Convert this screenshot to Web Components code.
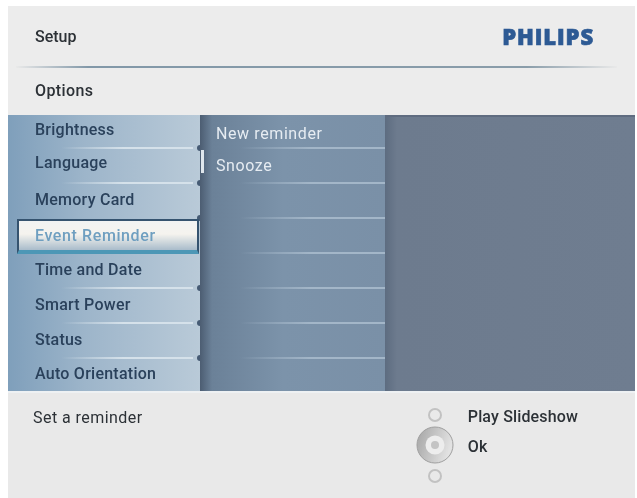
<!DOCTYPE html>
<html>
<head>
<meta charset="utf-8">
<style>
html, body { margin: 0; background: #fff; }
body { padding: 6px 2px 0 8px; height: 498px; box-sizing: border-box; overflow: hidden; font-family: "Roboto", "Liberation Sans", sans-serif; }
</style>
</head>
<body>
<frame-screen>
  <top-bar slot="top"></top-bar>
  <menu-list slot="left" variant="main" selected="3" items="Brightness|Language|Memory Card|Event Reminder|Time and Date|Smart Power|Status|Auto Orientation"></menu-list>
  <menu-list slot="middle" variant="sub" items="New reminder|Snooze||||||"></menu-list>
  <hint-bar slot="bottom"></hint-bar>
</frame-screen>
<script>
"use strict";
class FrameScreen extends HTMLElement {
    constructor() {
        super();
        this.attachShadow({ mode: 'open' });
    }
    connectedCallback() {
        this.shadowRoot.innerHTML = `
            <style>
                :host {
                    display: flex;
                    flex-direction: column;
                    height: 492px;
                    background: #e9e9e9;
                    color: #2c3136;
                    filter: blur(0.45px);
                }
                .panel {
                    display: grid;
                    grid-template-columns: 192px 185px 1fr;
                    height: 276px;
                    overflow: hidden;
                }
                .right {
                    background: linear-gradient(90deg, #5d6c80 0, #6d7b8e 12px, #6f7d90 100%);
                    border-top: 2px solid #5f6c80;
                }
            </style>
            <slot name="top"></slot>
            <div class="panel">
                <slot name="left"></slot>
                <slot name="middle"></slot>
                <div class="right"></div>
            </div>
            <slot name="bottom"></slot>
        `;
    }
}
class TopBar extends HTMLElement {
    constructor() {
        super();
        this.attachShadow({ mode: 'open' });
    }
    connectedCallback() {
        this.shadowRoot.innerHTML = `
            <style>
                :host { display: block; height: 109px; font-size: 16px; background: #ececec; }
                .title {
                    display: flex;
                    justify-content: space-between;
                    align-items: center;
                    height: 60px;
                    padding: 0 41px 0 27px;
                    box-sizing: border-box;
                    font-weight: 500;
                }
                .logo {
                    color: #2d5a94;
                    font: 800 22px "Open Sans", sans-serif;
                    -webkit-text-stroke: 0.7px #2d5a94;
                    letter-spacing: 0.9px;
                }
                .line {
                    height: 2px;
                    margin: 0 18px 0 8px;
                    background: linear-gradient(90deg, #e9e9e9 0, #8298a8 12%, #8a9daa 85%, #e9e9e9 100%);
                }
                .options {
                    display: flex;
                    align-items: center;
                    height: 45px;
                    padding: 0 27px;
                    font-weight: 500;
                }
                .options span { letter-spacing: 0.4px; }
            </style>
            <div class="title"><span>Setup</span><span class="logo">PHILIPS</span></div>
            <div class="line"></div>
            <div class="options"><span>Options</span></div>
        `;
    }
}
class MenuList extends HTMLElement {
    constructor() {
        super();
        this.attachShadow({ mode: 'open' });
    }
    connectedCallback() {
        const items = this.getAttribute('items').split('|');
        const selected = parseInt(this.getAttribute('selected') ?? '-1', 10);
        const isSub = this.getAttribute('variant') === 'sub';
        const rows = items.map((label, i) => {
            const cls = ['row'];
            if (i === selected) cls.push('selected');
            if (i === selected - 1) cls.push('before');
            if (i === 0) cls.push('first');
            if (i === 1) cls.push('second');
            return `<div class="${cls.join(' ')}"><span>${label}</span></div>`;
        }).join('');
        this.shadowRoot.innerHTML = `
            <style>
                :host {
                    display: block;
                    position: relative;
                    height: 276px;
                    overflow: hidden;
                    font-size: 16px;
                }
                :host([variant="main"]) {
                    background: linear-gradient(90deg, #7f9fbb 0, #9db5ca 40%, #b9cad8 100%);
                    color: #2a415b;
                }
                :host([variant="sub"]) {
                    background: linear-gradient(90deg, #4c5d72 0, #6b8198 12px, #7c93aa 45%, #7a90a7 100%);
                    color: #e6ecf2;
                }
                .list { margin-top: -1px; height: 265px; overflow: hidden; }
                .row {
                    position: relative;
                    display: flex;
                    align-items: center;
                    height: 35px;
                    box-sizing: border-box;
                    padding-left: 27px;
                    font-weight: 500;
                    letter-spacing: 0.25px;
                    border-bottom: 2px solid;
                    border-image: linear-gradient(90deg, transparent 28%, #d5e1ea 60%, #d5e1ea 96%, transparent 96%) 1;
                }
                :host([variant="main"]) .row span { transform: translateY(-1px); }
                :host([variant="main"]) .row:last-child span { transform: translateY(-2px); }
                :host([variant="main"]) .row.selected span { transform: none; }
                :host([variant="sub"]) .row {
                    padding-left: 16px;
                    font-weight: 400;
                    letter-spacing: 0.6px;
                    border-image: linear-gradient(90deg, transparent 22%, #a3b6c8 60%, #a3b6c8 100%) 1;
                }
                :host([variant="sub"]) .row.first span { transform: translateY(3px); }
                :host([variant="main"]) .row.second span { transform: translateY(-3px); }
                :host([variant="main"]) .row::after {
                    content: "";
                    position: absolute;
                    right: 0;
                    bottom: -4px;
                    width: 3px;
                    height: 6px;
                    border-radius: 3px 0 0 3px;
                    background: #465b74;
                }
                .row.before { border-image: none; border-bottom-color: transparent; }
                .row.selected {
                    margin: 0 1px 0 9px;
                    padding-left: 16px;
                    letter-spacing: 0.6px;
                    color: #6f9fc0;
                    border: 2px solid #35536f;
                    border-bottom: 4px solid #4d97b6;
                    background: linear-gradient(180deg, #f1f3f3 0, #f5f3ee 45%, #a9bccb 100%);
                }
                .row.selected::after { display: none; }
                .thumb {
                    position: absolute;
                    left: 1px;
                    top: 35px;
                    width: 3px;
                    height: 23px;
                    background: #dfe6ec;
                }
            </style>
            <div class="list">${rows}</div>
            ${isSub ? '<div class="thumb"></div>' : ''}
        `;
    }
}
class HintBar extends HTMLElement {
    constructor() {
        super();
        this.attachShadow({ mode: 'open' });
    }
    connectedCallback() {
        this.shadowRoot.innerHTML = `
            <style>
                :host {
                    display: flex;
                    flex: 1;
                    justify-content: space-between;
                    padding: 15px 57px 0 25px;
                    font-size: 16px;
                    border-top: 2px solid #eef1f3;
                }
                .reminder { letter-spacing: 0.45px; }
                .keys { display: flex; gap: 14px; }
                svg { display: block; }
                .labels { display: flex; flex-direction: column; gap: 11px; margin-top: -1px; font-weight: 500; letter-spacing: 0.15px; }
            </style>
            <div class="reminder">Set a reminder</div>
            <div class="keys">
                <svg width="38" height="80" viewBox="0 0 38 80">
                    <defs>
                        <linearGradient id="disc" x1="0" y1="0" x2="1" y2="0.3">
                            <stop offset="0" stop-color="#a4a4a4"/>
                            <stop offset="1" stop-color="#e2e2e2"/>
                        </linearGradient>
                    </defs>
                    <circle cx="19" cy="7" r="6" fill="#e9e9e9" stroke="#c2c2c2" stroke-width="2"/>
                    <circle cx="19" cy="37" r="18" fill="url(#disc)" stroke="#a0a0a0"/>
                    <circle cx="19" cy="37" r="9.5" fill="#ededed"/>
                    <circle cx="19" cy="37" r="4" fill="#c4c4c4"/>
                    <circle cx="19" cy="68" r="6" fill="#e9e9e9" stroke="#c2c2c2" stroke-width="2"/>
                </svg>
                <div class="labels"><span>Play Slideshow</span><span>Ok</span></div>
            </div>
        `;
    }
}
customElements.define('frame-screen', FrameScreen);
customElements.define('top-bar', TopBar);
customElements.define('menu-list', MenuList);
customElements.define('hint-bar', HintBar);
</script>
</body>
</html>
